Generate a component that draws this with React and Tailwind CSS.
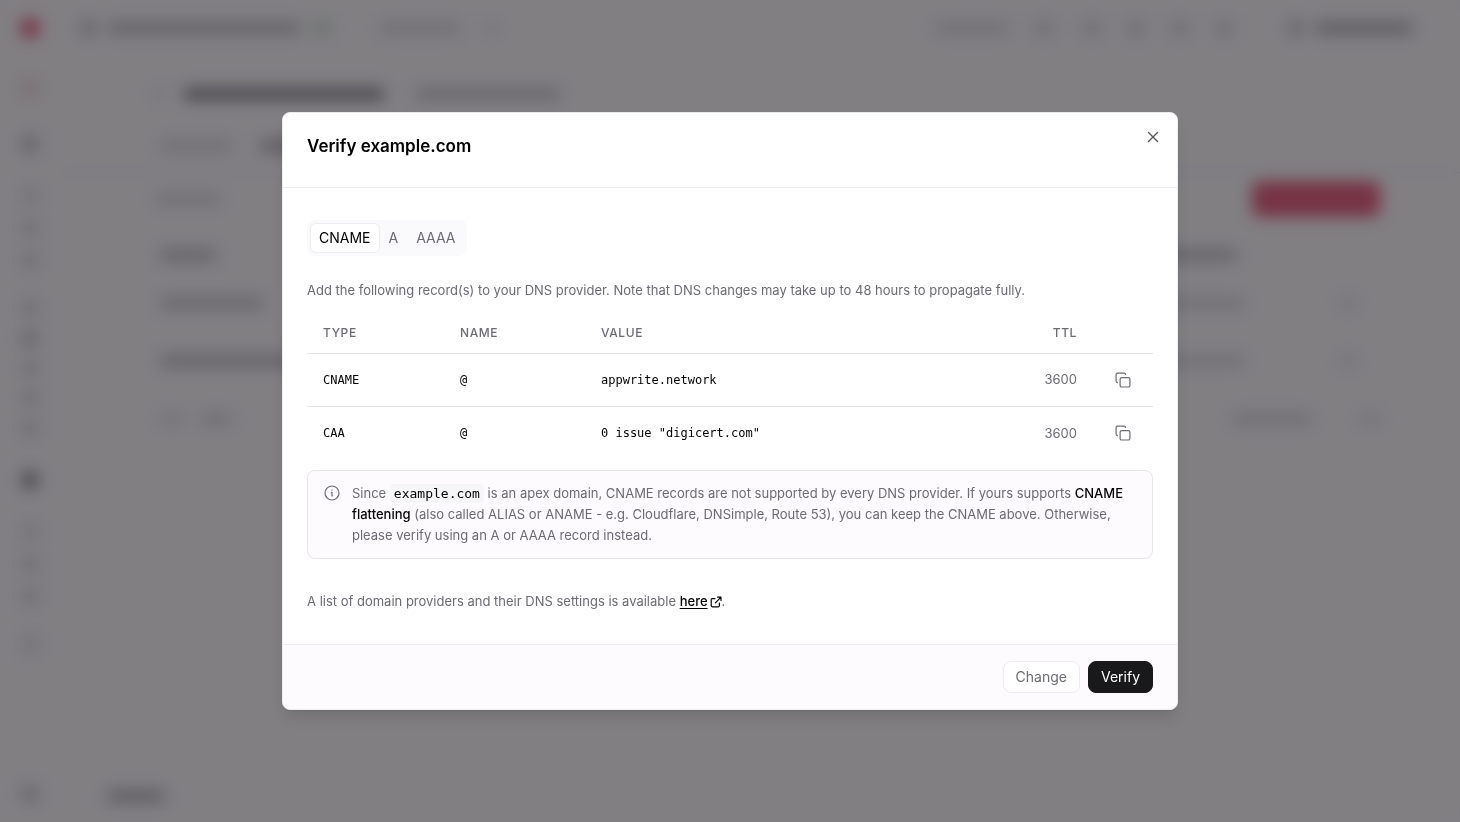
import React, { useState } from "react";

const tabs = ["CNAME", "A", "AAAA"];

const records = [
  { type: "CNAME", name: "@", value: "appwrite.network", ttl: 3600 },
  { type: "CAA", name: "@", value: '0 issue "digicert.com"', ttl: 3600 },
];

function CloseIcon() {
  return (
    <svg viewBox="0 0 20 20" className="size-5" fill="none" stroke="currentColor" strokeWidth="1.4" strokeLinecap="round" aria-hidden="true">
      <path d="M5.5 5.5l9 9M14.5 5.5l-9 9" />
    </svg>
  );
}

function CopyIcon() {
  return (
    <svg viewBox="0 0 16 16" className="size-4" fill="none" stroke="currentColor" strokeWidth="1.2" strokeLinecap="round" strokeLinejoin="round" aria-hidden="true">
      <rect x="5.1" y="5.6" width="9.8" height="9.4" rx="1.6" />
      <path d="M2.4 10.6C1.4 10.5 1.1 10 1.1 9V2.6C1.1 1.5 1.6 1.1 2.6 1.1H9c1 0 1.5.3 1.6 1.3" />
    </svg>
  );
}

function InfoIcon() {
  return (
    <svg viewBox="0 0 16 16" className="size-4" fill="none" stroke="currentColor" strokeWidth="1.2" strokeLinecap="round" strokeLinejoin="round" aria-hidden="true">
      <circle cx="8" cy="8" r="7" />
      <path d="M7.4 7.4H8v3.4h.5" />
      <circle cx="8" cy="5.1" r="0.7" fill="currentColor" stroke="none" />
    </svg>
  );
}

function ExternalIcon() {
  return (
    <svg viewBox="0 0 12 12" className="ml-[2px] inline size-3 align-[-2px]" fill="none" stroke="currentColor" strokeWidth="1.2" strokeLinecap="round" strokeLinejoin="round" aria-hidden="true">
      <path d="M7.6 1.2H11v3.4M11 1.2L5.4 6.8M5 2.6H2.4C1.6 2.6 1.2 3 1.2 3.8v5.8c0 .8.4 1.2 1.2 1.2h5.8c.8 0 1.2-.4 1.2-1.2V7.2" />
    </svg>
  );
}

function Backdrop() {
  return (
    <div aria-hidden="true" className="flex min-h-screen flex-col bg-[#fefcff]">
      <div className="flex h-14 items-center justify-between pr-12 pl-5">
        <div className="flex items-center">
          <div className="size-5 rounded-full bg-[#ee5f82]" />
          <div className="ml-10 size-4 rounded-full bg-[#c6c4c8]" />
          <div className="ml-3 h-3 w-48 bg-[#c6c4c8]" />
          <div className="ml-3 h-4 w-5 bg-[#dce8e2]" />
          <div className="ml-12 h-3 w-20 bg-[#dfdde0]" />
          <div className="ml-7 h-3 w-2 bg-[#dfdde0]" />
        </div>
        <div className="flex items-center">
          <div className="h-3 w-18 bg-[#dfdde0]" />
          <div className="ml-7 size-4 bg-[#dfdde0]" />
          <div className="ml-8 size-4 bg-[#dfdde0]" />
          <div className="ml-7 size-4 bg-[#dfdde0]" />
          <div className="ml-7 size-4 bg-[#dfdde0]" />
          <div className="ml-7 size-4 bg-[#dfdde0]" />
          <div className="ml-14 size-4 rounded-full bg-[#c6c4c8]" />
          <div className="ml-3 h-3 w-24 bg-[#b8b6ba]" />
        </div>
      </div>
      <div className="flex flex-1">
        <div className="flex w-15 flex-col items-center justify-between pt-6 pb-5">
          <div className="flex flex-col items-center">
            <div className="size-4 rounded-full bg-[#f2cfda]" />
            <div className="mt-10 size-4 rounded bg-[#c6c4c8]" />
            <div className="mt-9 flex flex-col gap-4">
              <div className="size-4 bg-[#e6e4e7]" />
              <div className="size-4 bg-[#dfdde0]" />
              <div className="size-4 bg-[#dfdde0]" />
            </div>
            <div className="mt-8 flex flex-col gap-[14px]">
              <div className="size-4 bg-[#dfdde0]" />
              <div className="size-4 bg-[#cfcdd0]" />
              <div className="size-4 bg-[#dfdde0]" />
              <div className="size-4 bg-[#dfdde0]" />
              <div className="size-4 bg-[#dfdde0]" />
            </div>
            <div className="mt-9 size-4 rounded bg-[#8f8d91]" />
            <div className="mt-9 flex flex-col gap-4">
              <div className="size-4 bg-[#e6e4e7]" />
              <div className="size-4 bg-[#dfdde0]" />
              <div className="size-4 bg-[#dfdde0]" />
            </div>
            <div className="mt-8 size-4 bg-[#e6e4e7]" />
          </div>
          <div className="size-4 bg-[#cfcdd0]" />
        </div>
        <div className="flex flex-1 flex-col justify-between pt-8 pb-5">
          <div>
            <div className="flex items-center pl-24">
              <div className="h-3 w-2 bg-[#dfdde0]" />
              <div className="ml-5 h-3 w-50 bg-[#8f8d91]" />
              <div className="ml-8 h-3 w-36 bg-[#cfcdd0]" />
            </div>
            <div className="mt-10 flex gap-7 border-b border-[#edebee] pb-5 pl-25">
              <div className="h-3 w-18 bg-[#dfdde0]" />
              <div className="h-3 w-16 bg-[#b8b6ba]" />
            </div>
            <div className="mt-2 flex items-center justify-between pr-20 pl-24">
              <div className="h-3 w-16 bg-[#dfdde0]" />
              <div className="h-9 w-32 rounded-lg bg-[#ea6584]" />
            </div>
            <div className="mt-8 flex flex-col gap-9 pr-20 pl-25">
              <div className="flex items-center justify-between">
                <div className="h-3 w-14 bg-[#c6c4c8]" />
                <div className="mr-36 h-3 w-20 bg-[#c6c4c8]" />
              </div>
              <div className="flex flex-col gap-[46px]">
                <div className="flex items-center">
                  <div className="h-3 w-26 bg-[#cfcdd0]" />
                  <div className="ml-auto h-3 w-20 bg-[#dfdde0]" />
                  <div className="mr-6 ml-24 h-3 w-4 bg-[#e6e4e7]" />
                </div>
                <div className="flex items-center">
                  <div className="h-3 w-40 bg-[#c6c4c8]" />
                  <div className="ml-auto h-3 w-20 bg-[#dfdde0]" />
                  <div className="mr-6 ml-24 h-3 w-4 bg-[#e6e4e7]" />
                </div>
                <div className="flex items-center">
                  <div className="h-3 w-6 bg-[#e6e4e7]" />
                  <div className="ml-4 h-3 w-8 bg-[#dfdde0]" />
                  <div className="mr-12 ml-auto h-3 w-20 bg-[#dfdde0]" />
                  <div className="h-3 w-5 bg-[#e6e4e7]" />
                </div>
              </div>
            </div>
          </div>
          <div className="flex pl-12">
            <div className="h-3 w-14 bg-[#b8b6ba]" />
          </div>
        </div>
      </div>
    </div>
  );
}

export default function App() {
  const [tab, setTab] = useState("CNAME");
  return (
    <div className="font-['Inter','Liberation_Sans',sans-serif]">
      <Backdrop />
      <div className="fixed inset-0 flex items-center justify-center bg-[#040205]/50 backdrop-blur-sm">
        <section
          role="dialog"
          aria-modal="true"
          aria-labelledby="dialog-title"
          className="w-full max-w-4xl overflow-hidden rounded-lg border border-[#ededf0] bg-white text-[13px] leading-[21px] text-[#6c6b72] shadow-lg"
        >
          <header className="flex items-start justify-between border-b border-[#ededf0] pt-[14px] pr-[14px] pb-[29px] pl-6">
            <h1 id="dialog-title" className="pt-[7px] text-[17px] leading-6 font-semibold text-black">
              Verify example.com
            </h1>
            <button type="button" aria-label="Close" className="text-[#56565c]">
              <CloseIcon />
            </button>
          </header>

          <div className="px-6 py-8">
            <div role="tablist" aria-label="Record type" className="flex h-9 w-fit items-center rounded-lg bg-[#faf9fb] px-[3px] text-sm leading-5">
              {tabs.map((t) => (
                <button
                  key={t}
                  type="button"
                  role="tab"
                  aria-selected={tab === t}
                  onClick={() => setTab(t)}
                  className={
                    tab === t
                      ? "rounded-md border border-[#ededf0] bg-white px-2 py-1 text-black"
                      : "rounded-md border border-transparent px-2 py-1 text-[#6c6b72]"
                  }
                >
                  {t}
                </button>
              ))}
            </div>

            <p className="mt-6">
              Add the following record(s) to your DNS provider. Note that DNS changes may take up to 48 hours to propagate fully.
            </p>

            <table className="mt-3 w-full table-fixed border-collapse text-left">
              <thead>
                <tr className="border-b border-[#e4e4e7] text-xs leading-5 tracking-wider uppercase">
                  <th scope="col" className="w-[137px] px-4 py-[10px] font-medium">Type</th>
                  <th scope="col" className="w-[141px] px-4 font-medium">Name</th>
                  <th scope="col" className="px-4 font-medium">Value</th>
                  <th scope="col" className="w-20 px-4 text-right font-medium">TTL</th>
                  <th scope="col" className="w-15" aria-label="Copy" />
                </tr>
              </thead>
              <tbody>
                {records.map((r) => (
                  <tr key={r.type} className="h-[53px] border-b border-[#e4e4e7] last:border-0">
                    <td className="px-4 font-['DejaVu_Sans_Mono',monospace] text-xs text-black">{r.type}</td>
                    <td className="px-4 font-['DejaVu_Sans_Mono',monospace] text-xs text-black">{r.name}</td>
                    <td className="px-4 font-['DejaVu_Sans_Mono',monospace] text-xs text-black">{r.value}</td>
                    <td className="px-4 text-right">{r.ttl}</td>
                    <td className="align-middle">
                      <button type="button" aria-label={`Copy ${r.type} value`} className="mx-auto block">
                        <CopyIcon />
                      </button>
                    </td>
                  </tr>
                ))}
              </tbody>
            </table>

            <div className="mt-[11px] flex gap-3 rounded-lg border border-[#e7e6ea] bg-[#fdfbfe] px-4 py-3">
              <span className="shrink-0 pt-[2px]">
                <InfoIcon />
              </span>
              <p className="flex-1">
                Since{" "}
                <code className="rounded bg-[#f6f5f7] px-1 py-[2px] font-['DejaVu_Sans_Mono',monospace] text-[13px] text-black">example.com</code>{" "}
                is an apex domain, CNAME records are not supported by every DNS provider. If yours supports{" "}
                <strong className="font-medium text-black">CNAME flattening</strong> (also called ALIAS or ANAME - e.g. Cloudflare,
                DNSimple, Route 53), you can keep the CNAME above. Otherwise, please verify using an A or AAAA record instead.
              </p>
            </div>

            <p className="mt-8">
              A list of domain providers and their DNS settings is available{" "}
              <a href="#providers" className="font-medium text-black">
                <span className="underline underline-offset-2">here</span>
                <ExternalIcon />
              </a>
              .
            </p>
          </div>

          <footer className="flex justify-end gap-2 border-t border-[#ededf0] bg-[#fdfbfe] px-6 py-4 text-sm">
            <button type="button" className="h-8 rounded-lg border border-[#ededf0] bg-white px-3 text-[#6c6b72]">
              Change
            </button>
            <button type="button" className="h-8 rounded-lg border border-[#19191c] bg-[#19191c] px-3 text-white">
              Verify
            </button>
          </footer>
        </section>
      </div>
    </div>
  );
}
